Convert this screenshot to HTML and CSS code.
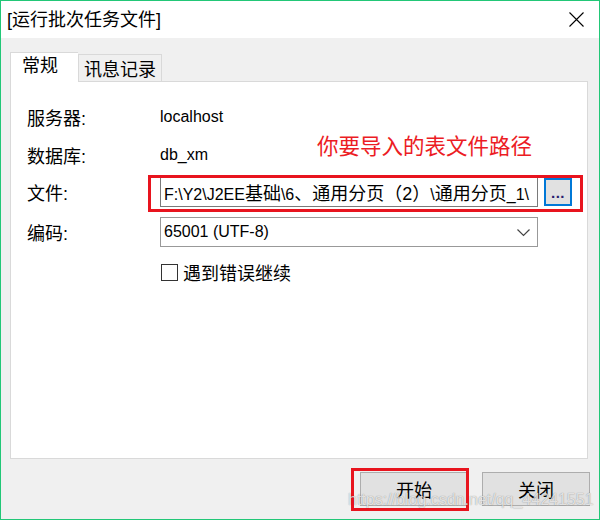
FILE: index.html
```html
<!DOCTYPE html>
<html lang="zh-CN">
<head>
<meta charset="utf-8">
<title>运行批次任务文件</title>
<link rel="stylesheet" href="styles.css">
</head>
<body>
<div class="window">
  <div class="titlebar">
    <span class="title">[运行批次任务文件]</span>
    <svg class="close" width="15" height="15" viewBox="0 0 15 15"><path d="M0.5 0.5 L14.5 14.5 M14.5 0.5 L0.5 14.5" stroke="#000" stroke-width="1.1" fill="none"/></svg>
  </div>
  <div class="content">
    <div class="tabs">
      <div class="tab active">常规</div>
      <div class="tab">讯息记录</div>
    </div>
    <div class="panel">
      <div class="note">你要导入的表文件路径</div>
      <div class="form">
        <div class="row r1"><span class="label">服务器:</span><span class="val">localhost</span></div>
        <div class="row r2"><span class="label">数据库:</span><span class="val">db_xm</span></div>
        <div class="row r3"><span class="label">文件:</span>
          <div class="field">
            <div class="input"><span class="path">F:\Y2\J2EE<span class="cj">基础</span>\6<span class="cj">、通用分页（2）</span>\<span class="cj">通用分页</span>_1\</span></div>
            <div class="browse"><span>...</span></div>
          </div>
        </div>
        <div class="row r4"><span class="label">编码:</span>
          <div class="combo"><span class="val">65001 (UTF-8)</span>
            <svg class="chev" width="13" height="8" viewBox="0 0 13 8"><path d="M0.5 0.5 L6.5 6.5 L12.5 0.5" stroke="#444" stroke-width="1.2" fill="none"/></svg>
          </div>
        </div>
        <div class="row r5"><span class="label"></span>
          <div class="check"><span class="box"></span><span class="ctext">遇到错误继续</span></div>
        </div>
      </div>
    </div>
    <div class="actions">
      <div class="btn start">开始</div>
      <div class="btn">关闭</div>
    </div>
  </div>
  <div class="watermark">https://blog.csdn.net/qq_44241551</div>
</div>
</body>
</html>
```
FILE: styles.css
```css
* { box-sizing: border-box; }
html, body { margin: 0; padding: 0; background: #fff; }
body {
  font-family: "Liberation Sans", "Noto Sans CJK SC", sans-serif;
  font-size: 18px;
  color: #000;
}
.window {
  position: relative;
  width: 600px;
  height: 520px;
  border: 1px solid #22c777;
  display: flex;
  flex-direction: column;
  background: #f0f0f0;
}
.titlebar {
  height: 37px;
  background: #fff;
  display: flex;
  align-items: center;
  justify-content: space-between;
  padding: 0 15px 0 6px;
}
.title { line-height: 20px; margin-top: 1px; }
.close { display: block; margin-top: -1px; }
.content {
  flex: 1;
  display: flex;
  flex-direction: column;
  padding-top: 14px;
}
.tabs {
  display: flex;
  align-items: flex-end;
  margin-left: 9px;
  height: 29px;
}
.tab {
  height: 27px;
  border: 1px solid #d9d9d9;
  border-bottom: none;
  background: #f0f0f0;
  line-height: 20px;
  padding: 5px 0 0 0;
  width: 84px;
  text-align: center;
}
.tab.active {
  height: 30px;
  width: 68px;
  margin-bottom: -1px;
  position: relative;
  z-index: 1;
  background: #fff;
  text-align: left;
  padding: 3px 0 0 11px;
  border-right: none;
}
.panel {
  position: relative;
  height: 378px;
  margin: 0 11px 0 9px;
  background: #fff;
  border: 1px solid #d9d9d9;
  padding: 23px 0 0 16px;
}
.note {
  position: absolute;
  left: 306px;
  top: 50px;
  font-size: 21.5px;
  line-height: 26px;
  color: #ec1c24;
  font-family: "Noto Sans CJK SC", sans-serif;
}
.form { display: flex; flex-direction: column; }
.row { display: flex; align-items: center; }
.label { width: 133px; flex: none; }
.r1, .r2 { height: 24px; }
.r2 { margin-top: 14px; }
.r3 { height: 30px; margin-top: 10px; }
.r4 { height: 30px; margin-top: 10px; }
.r5 { height: 20px; margin-top: 15px; }
.val { font-size: 16px; }
.field {
  position: relative;
  display: flex;
  align-items: center;
  gap: 6px;
}
.field::after {
  content: "";
  position: absolute;
  left: -12px;
  right: -11px;
  top: -2px;
  bottom: -5px;
  border: 3px solid #e8141e;
  pointer-events: none;
}
.input {
  width: 378px;
  height: 30px;
  border: 1px solid #7a7a7a;
  overflow: hidden;
  white-space: nowrap;
  padding-left: 3px;
  display: flex;
  align-items: center;
}
.path { font-size: 16px; }
.cj { font-size: 18px; }
.browse {
  width: 28px;
  height: 28px;
  border: 2px solid #0078d7;
  background: #e1e1e1;
  display: flex;
  align-items: flex-end;
  justify-content: center;
  color: #27206e;
  font-size: 15px;
  font-weight: bold;
  line-height: 14px;
  padding-bottom: 4px;
  letter-spacing: 0.5px;
}
.combo {
  width: 378px;
  height: 30px;
  border: 1px solid #999;
  display: flex;
  align-items: center;
  justify-content: space-between;
  padding: 0 7px 0 3px;
}
.chev { display: block; margin-top: 2px; }
.check { display: flex; align-items: center; }
.box {
  width: 17px;
  height: 17px;
  border: 1px solid #333;
  margin-left: 1px;
  background: #fff;
}
.ctext { margin-left: 5px; }
.actions {
  display: flex;
  justify-content: flex-end;
  gap: 14px;
  padding: 13px 9px 0 0;
}
.btn {
  width: 108px;
  height: 34px;
  background: #e1e1e1;
  border: 1px solid #adadad;
  display: flex;
  align-items: center;
  justify-content: center;
}
.btn.start { position: relative; }
.btn.start::after {
  content: "";
  position: absolute;
  left: -10px;
  right: -2px;
  top: -5px;
  bottom: -6px;
  border: 3px solid #e8141e;
}
.watermark {
  position: absolute;
  left: 347px;
  top: 490px;
  font-family: "Liberation Sans", sans-serif;
  font-size: 16px;
  line-height: 18px;
  color: rgba(255, 255, 255, 0.75);
  text-shadow: 0 0 1px rgba(0, 0, 0, 0.45);
  white-space: nowrap;
}
```
